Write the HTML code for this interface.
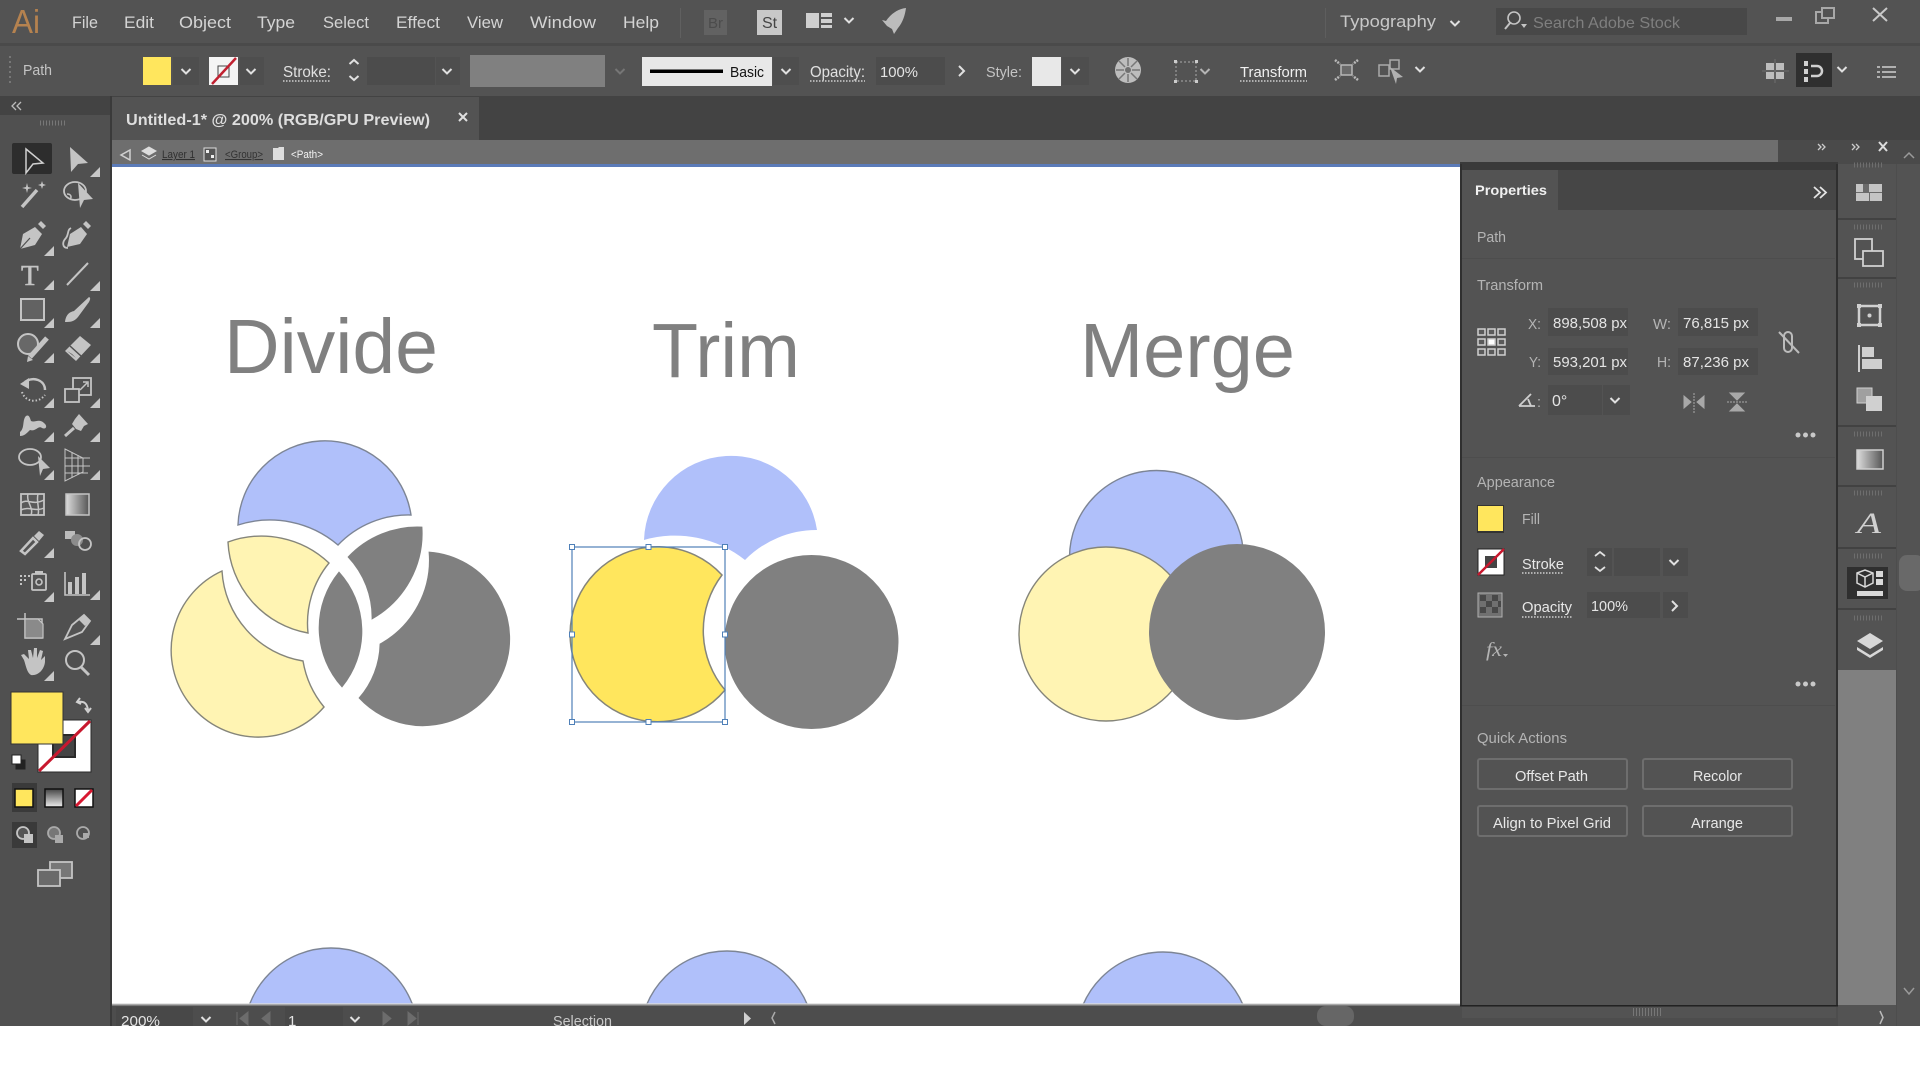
<!DOCTYPE html>
<html><head><meta charset="utf-8"><title>Illustrator</title>
<style>html,body{margin:0;padding:0;background:#fff;overflow:hidden}svg{display:block}text{font-family:"Liberation Sans",sans-serif}</style></head>
<body>
<svg xmlns="http://www.w3.org/2000/svg" width="1920" height="1080" viewBox="0 0 1920 1080">
<defs>
<path id="c" d="M-4.5 -2 L0 2.5 L4.5 -2" fill="none" stroke="#e0e0e0" stroke-width="2"/>
<path id="t" d="M-5 5 L5 5 L5 -5Z" fill="#c8c8c8"/>
<clipPath id="cv"><rect x="112" y="167" width="1348" height="838"/></clipPath>
<linearGradient id="g1" x1="0" x2="1"><stop offset="0" stop-color="#ddd"/><stop offset="1" stop-color="#555"/></linearGradient>
<linearGradient id="g2" x1="0" x2="0" y1="0" y2="1"><stop offset="0" stop-color="#444"/><stop offset="1" stop-color="#eee"/></linearGradient>
</defs>
<rect width="1920" height="1080" fill="#fff"/>
<!-- chrome -->
<rect width="1920" height="1026" fill="#535353"/>
<rect y="43" width="1920" height="3" fill="#4a4a4a"/>
<rect y="96" width="1920" height="44" fill="#434343"/>
<rect x="0" y="115" width="110" height="911" fill="#505050"/>
<rect x="110" y="96" width="2" height="930" fill="#3a3a3a"/>
<rect x="112" y="97" width="367" height="43" fill="#535353"/>
<rect x="112" y="140" width="1666" height="24" fill="#6e6e6e"/>
<rect x="1778" y="140" width="142" height="24" fill="#4a4a4a"/>
<!-- menu -->
<text x="12" y="33" font-size="33" fill="#b5824f" textLength="28" lengthAdjust="spacingAndGlyphs">Ai</text>
<g font-size="17" fill="#d4d4d4">
<text x="72" y="28" textLength="26" lengthAdjust="spacingAndGlyphs">File</text>
<text x="124" y="28" textLength="30" lengthAdjust="spacingAndGlyphs">Edit</text>
<text x="179" y="28" textLength="52" lengthAdjust="spacingAndGlyphs">Object</text>
<text x="257" y="28" textLength="38" lengthAdjust="spacingAndGlyphs">Type</text>
<text x="323" y="28" textLength="46" lengthAdjust="spacingAndGlyphs">Select</text>
<text x="396" y="28" textLength="44" lengthAdjust="spacingAndGlyphs">Effect</text>
<text x="467" y="28" textLength="36" lengthAdjust="spacingAndGlyphs">View</text>
<text x="530" y="28" textLength="66" lengthAdjust="spacingAndGlyphs">Window</text>
<text x="623" y="28" textLength="36" lengthAdjust="spacingAndGlyphs">Help</text>
</g>
<rect x="680" y="8" width="1" height="30" fill="#606060"/>
<rect x="704" y="10" width="23" height="25" fill="#626262"/>
<text x="708" y="28" font-size="15" fill="#4c4c4c">Br</text>
<rect x="757" y="10" width="25" height="25" fill="#c8c8c8"/>
<text x="762" y="28" font-size="16" fill="#444">St</text>
<path d="M806 13h13v15h-13z M821 13h11v4h-11z M821 19h11v4h-11z M821 25h11v3h-11z" fill="#cfcfcf"/>
<use href="#c" x="849" y="20"/>
<path d="M906 8 C897 9 890 15 886 21 L882 20 L887 26 L892 29 L894 34 L898 28 C903 22 905 15 906 8Z" fill="#bcbcbc"/>
<rect x="1325" y="8" width="1" height="30" fill="#5e5e5e"/>
<text x="1340" y="27" font-size="17" fill="#c8c8c8" textLength="96" lengthAdjust="spacingAndGlyphs">Typography</text>
<use href="#c" x="1455" y="23"/>
<rect x="1496" y="8" width="251" height="27" fill="#484848"/>
<circle cx="1514" cy="18" r="6" fill="none" stroke="#c4c4c4" stroke-width="1.6"/><path d="M1510 23 L1505 29" stroke="#c4c4c4" stroke-width="2"/><path d="M1521 24h6l-3 4z" fill="#c4c4c4"/>
<text x="1533" y="28" font-size="16" fill="#7f7f7f" textLength="147" lengthAdjust="spacingAndGlyphs">Search Adobe Stock</text>
<rect x="1776" y="17" width="16" height="4" fill="#a8a8a8"/>
<path d="M1822 8h12v10h-6v5h-12v-11h6z M1822 12h-6 M1822 12v6h6" fill="none" stroke="#a8a8a8" stroke-width="2"/>
<path d="M1873 8L1887 21M1887 8L1873 21" stroke="#c8c8c8" stroke-width="2"/>
<!-- control bar -->
<path d="M10 56v28" stroke="#777" stroke-width="2" stroke-dasharray="2 3"/>
<text x="23" y="75" font-size="15" fill="#c4c4c4" textLength="29" lengthAdjust="spacingAndGlyphs">Path</text>
<rect x="143" y="57" width="28" height="28" fill="#ffe65d"/><rect x="173" y="57" width="26" height="28" fill="#4e4e4e"/><use href="#c" x="186" y="71"/>
<rect x="209" y="57" width="29" height="28" fill="#f4f4f4"/><rect x="218" y="66" width="11" height="11" fill="none" stroke="#444"/><path d="M212 84L236 58" stroke="#c02030" stroke-width="2.5"/>
<rect x="240" y="57" width="24" height="28" fill="#4e4e4e"/><use href="#c" x="251" y="71"/>
<text x="283" y="77" font-size="16" fill="#e0e0e0" textLength="48" lengthAdjust="spacingAndGlyphs">Stroke:</text>
<path d="M283 81h48" stroke="#d0d0d0" stroke-dasharray="1.5 1.5" stroke-width="1.5"/>
<path d="M349.500 64L354 60L358.500 64M349.500 76L354 80L358.500 76" fill="none" stroke="#e0e0e0" stroke-width="2"/>
<rect x="367" y="57" width="68" height="28" fill="#4c4c4c"/><rect x="436" y="57" width="24" height="28" fill="#4e4e4e"/><use href="#c" x="447" y="71"/>
<rect x="470" y="55" width="135" height="32" fill="#808080"/><use href="#c" x="620" y="71" opacity=".25"/>
<rect x="642" y="57" width="130" height="29" fill="#e8e8e8"/><rect x="650" y="69.500" width="73" height="3.500" fill="#000"/>
<text x="730" y="77" font-size="15" fill="#111" textLength="34" lengthAdjust="spacingAndGlyphs">Basic</text>
<rect x="773" y="57" width="26" height="28" fill="#4e4e4e"/><use href="#c" x="786" y="71"/>
<text x="810" y="77" font-size="16" fill="#e0e0e0" textLength="55" lengthAdjust="spacingAndGlyphs">Opacity:</text>
<path d="M810 81h55" stroke="#d0d0d0" stroke-dasharray="1.5 1.5" stroke-width="1.5"/>
<rect x="876" y="57" width="69" height="28" fill="#4c4c4c"/>
<text x="880" y="77" font-size="15" fill="#e4e4e4" textLength="38" lengthAdjust="spacingAndGlyphs">100%</text>
<path d="M959 66l5 5l-5 5" fill="none" stroke="#e0e0e0" stroke-width="2"/>
<text x="986" y="77" font-size="15" fill="#c4c4c4" textLength="36" lengthAdjust="spacingAndGlyphs">Style:</text>
<rect x="1032" y="57" width="29" height="29" fill="#e8e8e8"/><rect x="1062" y="57" width="27" height="28" fill="#4e4e4e"/><use href="#c" x="1075" y="71"/>
<circle cx="1128" cy="70" r="13" fill="#bdbdbd"/><circle cx="1128" cy="70" r="3" fill="#707070"/><path d="M1128 58v8M1128 74v8M1116 70h8M1132 70h8M1119 61l6 6M1131 73l6 6M1137 61l-6 6M1125 73l-6 6" stroke="#777" stroke-width="1.5"/>
<rect x="1176" y="62" width="20" height="19" fill="none" stroke="#aaa" stroke-dasharray="2 2"/><path d="M1174 60h3v3h-3zM1195 60h3v3h-3zM1174 80h3v3h-3zM1195 80h3v3h-3z" fill="#ccc"/>
<use href="#c" x="1205" y="71" opacity=".7"/>
<text x="1240" y="77" font-size="15" fill="#f0f0f0" textLength="67" lengthAdjust="spacingAndGlyphs">Transform</text>
<path d="M1240 81h67" stroke="#d0d0d0" stroke-dasharray="1.5 1.5" stroke-width="1.5"/>
<rect x="1341" y="65" width="11" height="10" fill="#6a6a6a" stroke="#b8b8b8" stroke-width="1.500"/>
<path d="M1335 60l5 4M1358 60l-5 4M1335 80l5 -4M1358 80l-5 -4" stroke="#b8b8b8" stroke-width="2.500" stroke-dasharray="2 1"/>
<rect x="1379" y="65" width="10" height="11" fill="none" stroke="#aaa" stroke-width="1.500"/><rect x="1390" y="60" width="9" height="9" fill="none" stroke="#aaa" stroke-width="1.500"/>
<path d="M1390 67L1403 77L1397 78L1396 84Z" fill="#b0b0b0"/><use href="#c" x="1420" y="69"/>
<path d="M1766 63h8v7h-8zM1776 63h8v7h-8zM1766 72h8v7h-8zM1776 72h8v7h-8z" fill="#bdbdbd"/><path d="M1762 71h27M1775 59v24" stroke="#777" stroke-width=".8"/>
<rect x="1796" y="53" width="36" height="34" fill="#2f2f2f"/>
<path d="M1804 61h4v5h-4zM1804 69h4v5h-4zM1804 77h4v5h-4z" fill="#d0d0d0"/><path d="M1811 66h6a5 5 0 0 1 0 10h-6" fill="none" stroke="#d0d0d0" stroke-width="2.500"/>
<use href="#c" x="1842" y="69"/>
<path d="M1877 66h3v2h-3zM1882 66h14v2h-14zM1877 71h3v2h-3zM1882 71h14v2h-14zM1877 76h3v2h-3zM1882 76h14v2h-14z" fill="#b0b0b0"/>
<!-- tab -->
<text x="126" y="125" font-size="16" font-weight="bold" fill="#dedede" textLength="304" lengthAdjust="spacingAndGlyphs">Untitled-1* @ 200% (RGB/GPU Preview)</text>
<path d="M459 113l8 8M467 113l-8 8" stroke="#e0e0e0" stroke-width="2"/>
<path d="M16 102l-4 4l4 4M21 102l-4 4l4 4" fill="none" stroke="#bbb" stroke-width="1.300"/>
<path d="M40 123h27" stroke="#777" stroke-width="5" stroke-dasharray="1 2"/>
<!-- breadcrumb -->
<path d="M130 150l-9 5l9 5z" fill="none" stroke="#d0d0d0" stroke-width="1.500"/>
<path d="M149 147l7 4l-7 4l-7 -4zM142 155l7 4l7 -4l-7 4z" fill="#ddd" stroke="#ddd"/>
<text x="162" y="158" font-size="11" fill="#303030" textLength="33" lengthAdjust="spacingAndGlyphs" text-decoration="underline">Layer 1</text>
<rect x="204" y="148" width="12" height="13" fill="#555" stroke="#ddd"/><path d="M206 150h3v3h-3zM211 155h3v3h-3z" fill="#eee"/>
<text x="225" y="158" font-size="11" fill="#333" textLength="38" lengthAdjust="spacingAndGlyphs" text-decoration="underline">&lt;Group&gt;</text>
<path d="M273 148h5l1 -1h5v13h-11z" fill="#ddd"/>
<text x="291" y="158" font-size="11" fill="#f4f4f4" textLength="32" lengthAdjust="spacingAndGlyphs">&lt;Path&gt;</text>
<path d="M1818 144l3 3l-3 3M1822 144l3 3l-3 3M1852 144l3 3l-3 3M1856 144l3 3l-3 3" fill="none" stroke="#ccc" stroke-width="1.300"/>
<path d="M1879 142l8 9M1887 142l-8 9" stroke="#ddd" stroke-width="2"/>
<path d="M1904 158l5 -5l5 5" fill="none" stroke="#9a9a9a" stroke-width="1.500"/>
<!-- canvas -->
<rect x="112" y="164" width="1348" height="3" fill="#5b7bb8"/>
<rect x="112" y="167" width="1348" height="838" fill="#fff"/>
<g clip-path="url(#cv)">
<g fill="#808080" text-anchor="start">
<text x="224" y="373" font-size="77" textLength="214" lengthAdjust="spacingAndGlyphs">Divide</text>
<text x="652" y="377" font-size="77" textLength="148" lengthAdjust="spacingAndGlyphs">Trim</text>
<text x="1080" y="377" font-size="77" textLength="215" lengthAdjust="spacingAndGlyphs">Merge</text>
</g>
<g stroke="#85857a" stroke-width="1.400">
<path d="M238 525A87 87 0 0 1 411 515A97 97 0 0 0 338 545A105 105 0 0 0 238 525Z" fill="#b0c0fa" stroke="#7d8595"/>
<path d="M228 542A98 98 0 0 1 329 563A95 95 0 0 0 308 633A97 97 0 0 1 228 542Z" fill="#fff4b3"/>
<path d="M222 571A87 87 0 1 0 324 707A98 98 0 0 1 303 661A97 97 0 0 1 222 571Z" fill="#fff4b3"/>
</g>
<g fill="#808080" stroke="#808080" stroke-width=".8">
<path d="M348 557A95 95 0 0 1 422 527A98 98 0 0 1 372 619A88 88 0 0 0 348 557Z"/>
<path d="M339 572A88 88 0 0 1 342 687A88 88 0 0 1 339 572Z"/>
<path d="M429 552A87 87 0 1 1 359 698A85 85 0 0 0 380 644A96 96 0 0 0 429 552Z"/>
</g>
<path d="M644 540A87 87 0 0 1 817 530A100 100 0 0 0 745 560A112 112 0 0 0 644 540Z" fill="#b0c0fa"/>
<circle cx="811.500" cy="642" r="87" fill="#808080"/>
<path d="M722 575A87.500 87.500 0 1 0 725 690A92 92 0 0 1 722 575Z" fill="#ffe65d" stroke="#85857a" stroke-width="1.500"/>
<rect x="572" y="547" width="153" height="175" fill="none" stroke="#4f80b8" stroke-width="1.200"/>
<g fill="#fff" stroke="#4f80b8" stroke-width="1">
<rect x="569.500" y="544.500" width="5" height="5"/><rect x="646" y="544.500" width="5" height="5"/><rect x="722.500" y="544.500" width="5" height="5"/>
<rect x="569.500" y="632" width="5" height="5"/><rect x="722.500" y="632" width="5" height="5"/>
<rect x="569.500" y="719.500" width="5" height="5"/><rect x="646" y="719.500" width="5" height="5"/><rect x="722.500" y="719.500" width="5" height="5"/>
</g>
<circle cx="1156.500" cy="557.500" r="87" fill="#b0c0fa" stroke="#7d8595" stroke-width="1.400"/>
<circle cx="1106" cy="634" r="87" fill="#fff4b3" stroke="#85857a" stroke-width="1.400"/>
<circle cx="1237" cy="632" r="88" fill="#808080"/>
<g fill="#b0c0fa" stroke="#7d8595" stroke-width="1.400">
<circle cx="331" cy="1035" r="87"/><circle cx="727" cy="1038" r="87"/><circle cx="1163" cy="1039" r="87"/>
</g>
<rect x="112" y="1003" width="1348" height="2" fill="#dcdcdc" opacity=".7"/>
</g>
<!-- tools -->
<rect x="12" y="143" width="40" height="31" rx="2" fill="#2d2d2d"/>
<g fill="#c4c4c4" stroke="#c4c4c4" stroke-width="0">
<path d="M26 149L43 163L33 164L26 173Z" fill="#2d2d2d" stroke="#d0d0d0" stroke-width="1.500"/>
<path d="M70 147L88 163L78 164L71 172Z"/>
<!-- wand -->
<path d="M22 207L37 190" stroke-width="3.500" stroke="#c4c4c4"/><path d="M27 183l1 4l4 1l-4 1l-1 4l-1 -4l-4 -1l4 -1zM42 181l1 3l3 1l-3 1l-1 3l-1 -3l-3 -1l3 -1z"/>
<ellipse cx="75" cy="191" rx="11" ry="9" fill="none" stroke="#c4c4c4" stroke-width="1.800"/><path d="M78 183L93 199L84 200L80 208Z"/><path d="M67 194c4 0 5 3 3 5" fill="none" stroke="#c4c4c4" stroke-width="1.500"/>
<!-- pen -->
<path d="M20 249L23 234L35 227L42 234L35 245Z"/><path d="M38 224L41 221L46 226L43 229Z"/><path d="M20 249L30 238" stroke="#505050" stroke-width="1.200"/>
<path d="M67 247L70 234L81 227L87 234L80 244Z"/><path d="M83 224L86 221L91 226L88 229Z"/><path d="M68 248C62 248 62 242 66 238C69 234 67 230 71 228" fill="none" stroke="#c4c4c4" stroke-width="1.800"/>
<!-- type, line -->
<text x="21" y="285" font-size="29" style='font-family:"Liberation Serif",serif' fill="#c4c4c4" stroke="#c4c4c4" stroke-width=".5">T</text>
<path d="M67 285L88 263" stroke="#c4c4c4" stroke-width="2"/>
<!-- rect, brush -->
<rect x="21" y="299" width="23" height="21" fill="#626262" stroke="#c4c4c4" stroke-width="2"/>
<path d="M65 322C66 314 70 312 74 311L89 297C91 298 90 300 89 302L78 317C74 322 70 322 65 322Z"/>
<!-- shaper, eraser -->
<circle cx="28" cy="344" r="10" fill="#686868" stroke="#c4c4c4" stroke-width="2"/><path d="M30 357L47 338" stroke="#c4c4c4" stroke-width="5"/><path d="M27 362L28 356L33 360Z"/>
<path d="M65 351L80 336L91 345L76 361Z"/><path d="M70 346L81 356" stroke="#505050" stroke-width="1.500"/><path d="M67 351L76 358L72 354Z" fill="#535353"/>
<!-- rotate, scale -->
<path d="M25 382C33 376 45 380 45 390" fill="none" stroke="#c4c4c4" stroke-width="2.500"/><path d="M20 384L29 378L29 389Z"/><path d="M22 392C25 402 38 404 45 395" fill="none" stroke="#c4c4c4" stroke-width="2" stroke-dasharray="1.500 2"/>
<rect x="73" y="378" width="18" height="17" fill="none" stroke="#c4c4c4" stroke-width="1.800"/><rect x="65" y="389" width="14" height="13" fill="#535353" stroke="#c4c4c4" stroke-width="1.800"/><path d="M80 390L87 383M83 382h5v5" fill="none" stroke="#c4c4c4" stroke-width="1.500"/>
<!-- width, pin -->
<path d="M20 432C25 428 22 420 26 416C29 414 30 418 31 421C35 423 39 418 44 423C48 426 46 430 42 428C38 425 36 432 30 430C26 434 24 436 20 436Z"/>
<path d="M79 414L88 424L84 426L81 431L76 429L72 424L75 419Z"/><path d="M74 428L65 436" stroke="#c4c4c4" stroke-width="3"/>
<!-- free transform, mesh persp -->
<ellipse cx="30" cy="457" rx="11" ry="8" fill="none" stroke="#c4c4c4" stroke-width="1.800"/><path d="M38 456L50 468L43 469L40 476Z"/><path d="M24 453v8M28 453v8" stroke="#c4c4c4" stroke-dasharray="1 2"/>
<path d="M65 449L83 458V472L65 481ZM65 458H90M65 466H90M65 473H88M72 452V478M78 455V475" fill="none" stroke="#c4c4c4" stroke-width="1"/>
<!-- mesh, gradient -->
<rect x="21" y="494" width="23" height="21" fill="#5a5a5a" stroke="#c4c4c4" stroke-width="1.800"/><path d="M21 503C28 498 32 506 44 500M28 494C26 502 34 508 31 515M21 510C28 506 36 512 44 508M38 494C36 502 40 508 38 515" fill="none" stroke="#c4c4c4" stroke-width="1.500"/>
<rect x="66" y="494" width="23" height="21" fill="url(#g1)" stroke="#c4c4c4" stroke-width="1.500"/>
<!-- eyedropper, blend -->
<path d="M21 551L33 538L37 542L25 554Z" fill="#535353" stroke="#c4c4c4" stroke-width="2.500"/><path d="M34 536L39 531L44 535L39 541Z"/>
<rect x="65" y="531" width="10" height="8" fill="#bcbcbc"/><circle cx="77" cy="540" r="6" fill="#8c8c8c" stroke="#c4c4c4"/><circle cx="85" cy="544" r="6" fill="none" stroke="#c4c4c4" stroke-width="1.800"/>
<!-- symbol, graph -->
<rect x="32" y="574" width="14" height="16" rx="1" fill="#535353" stroke="#c4c4c4" stroke-width="1.800"/><circle cx="39" cy="582" r="3" fill="none" stroke="#c4c4c4" stroke-width="1.600"/><rect x="35" y="571" width="8" height="3"/><path d="M20 575h2v2h-2zM24 575h2v2h-2zM28 575h2v2h-2zM20 579h2v2h-2zM24 579h2v2h-2zM20 583h2v2h-2z"/>
<path d="M65 572V595H90" fill="none" stroke="#c4c4c4" stroke-width="1.600"/><path d="M68 582h4v12h-4zM75 577h4v17h-4zM82 573h4v21h-4z"/>
<!-- artboard, knife -->
<path d="M17 619H42V638H25V613" fill="none" stroke="#c4c4c4" stroke-width="1.500"/><path d="M25 619H38L43 624V638H25Z" fill="#8a8a8a" stroke="#c4c4c4" stroke-width="1.200"/>
<path d="M65 639L72 625L84 615L90 621L82 632Z" fill="#535353" stroke="#c4c4c4" stroke-width="1.800"/><path d="M79 620L85 626L90 621L84 615Z"/>
<!-- hand, zoom -->
<path d="M24 660L21 655L24 654L29 659L28 650L31 650L33 658L34 648L37 648L37 658L40 650L43 651L41 660L45 656L45 662C44 670 38 676 31 675C27 673 26 666 24 660Z"/>
<circle cx="75" cy="660" r="9" fill="none" stroke="#c4c4c4" stroke-width="2"/><path d="M81 667L89 675" stroke="#c4c4c4" stroke-width="3"/>
</g>
<use href="#t" x="95" y="172"/><use href="#t" x="49" y="251"/><use href="#t" x="49" y="285"/><use href="#t" x="95" y="286"/><use href="#t" x="49" y="323"/><use href="#t" x="95" y="323"/><use href="#t" x="49" y="358"/><use href="#t" x="95" y="358"/><use href="#t" x="49" y="403"/><use href="#t" x="95" y="403"/><use href="#t" x="49" y="437"/><use href="#t" x="95" y="437"/><use href="#t" x="49" y="475"/><use href="#t" x="95" y="475"/><use href="#t" x="49" y="553"/><use href="#t" x="49" y="597"/><use href="#t" x="95" y="595"/><use href="#t" x="95" y="640"/><use href="#t" x="49" y="676"/>
<path d="M38 720H91V772H38Z" fill="#fff" stroke="#2a2a2a"/><rect x="53" y="735" width="22" height="22" fill="#444" stroke="#2a2a2a" stroke-width="2"/>
<path d="M39 771L90 721" stroke="#c8182e" stroke-width="3"/>
<rect x="11" y="692" width="52" height="52" fill="#ffe65d" stroke="#333"/>
<path d="M80 698l-3 4l4 2M78 702C84 701 87 703 88 710M85 708l3 4l3 -4" fill="none" stroke="#d0d0d0" stroke-width="2"/>
<rect x="16" y="760" width="9" height="9" fill="#222" stroke="#222"/><rect x="12" y="755" width="9" height="9" fill="#fff" stroke="#222"/>
<rect x="12" y="783" width="25" height="29" fill="#3a3a3a"/><rect x="15" y="789" width="18" height="18" fill="#ffe65d" stroke="#111" stroke-width="1.500"/>
<rect x="45" y="789" width="18" height="18" fill="url(#g2)" stroke="#111" stroke-width="1.500"/>
<rect x="75" y="789" width="18" height="18" fill="#fff" stroke="#111" stroke-width="1.500"/><path d="M76 806L92 790" stroke="#d81830" stroke-width="3"/>
<rect x="12" y="822" width="25" height="26" fill="#3a3a3a"/>
<circle cx="23" cy="833" r="6" fill="#555" stroke="#c4c4c4" stroke-width="1.800"/><rect x="24" y="834" width="9" height="9" fill="#c4c4c4"/>
<circle cx="54" cy="833" r="6" fill="#777" stroke="#aaa" stroke-width="1.800"/><rect x="55" y="835" width="8" height="8" fill="#aaa"/>
<circle cx="83" cy="833" r="6" fill="none" stroke="#aaa" stroke-width="1.800"/><path d="M83 833h6v5h-6z" fill="#aaa"/>
<rect x="50" y="862" width="22" height="16" fill="#777" stroke="#c4c4c4" stroke-width="1.800"/><rect x="38" y="870" width="22" height="16" fill="#6a6a6a" stroke="#c4c4c4" stroke-width="1.800"/>
<!-- panel -->
<rect x="1460" y="162" width="378" height="8" fill="#3a3a3a"/>
<rect x="1460" y="164" width="2" height="842" fill="#2f2f2f"/>
<rect x="1558" y="170" width="278" height="40" fill="#464646"/>
<rect x="1836" y="164" width="2" height="842" fill="#2f2f2f"/>
<text x="1475" y="195" font-size="14" font-weight="bold" fill="#f0f0f0" textLength="72" lengthAdjust="spacingAndGlyphs">Properties</text>
<path d="M1814 187l6 5.500l-6 5.500M1820 187l6 5.500l-6 5.500" fill="none" stroke="#e4e4e4" stroke-width="1.800"/>
<g font-size="14.500" fill="#b4b4b4">
<text x="1477" y="242" textLength="29" lengthAdjust="spacingAndGlyphs">Path</text>
<text x="1477" y="290" textLength="66" lengthAdjust="spacingAndGlyphs">Transform</text>
<text x="1477" y="487" textLength="78" lengthAdjust="spacingAndGlyphs">Appearance</text>
<text x="1477" y="743" textLength="90" lengthAdjust="spacingAndGlyphs">Quick Actions</text>
<text x="1528" y="329" textLength="13" lengthAdjust="spacingAndGlyphs">X:</text>
<text x="1529" y="367" textLength="12" lengthAdjust="spacingAndGlyphs">Y:</text>
<text x="1653" y="329" textLength="18" lengthAdjust="spacingAndGlyphs">W:</text>
<text x="1657" y="367" textLength="14" lengthAdjust="spacingAndGlyphs">H:</text>
<text x="1537" y="407">:</text>
<text x="1522" y="524" textLength="18" lengthAdjust="spacingAndGlyphs">Fill</text>
</g>
<g fill="#4c4c4c"><rect x="1462" y="258" width="373" height="1" fill="#4d4d4d"/><rect x="1462" y="457" width="373" height="1" fill="#4d4d4d"/><rect x="1462" y="705" width="373" height="1" fill="#4d4d4d"/>
<rect x="1548" y="308" width="80" height="28"/><rect x="1548" y="348" width="80" height="27"/><rect x="1678" y="308" width="80" height="28"/><rect x="1678" y="348" width="80" height="27"/><rect x="1548" y="385" width="54" height="30"/><rect x="1603" y="385" width="27" height="30"/>
<rect x="1587" y="548" width="25" height="28"/><rect x="1614" y="548" width="46" height="28"/><rect x="1663" y="548" width="25" height="28"/><rect x="1587" y="592" width="73" height="26"/><rect x="1663" y="592" width="25" height="26"/></g>
<g font-size="15" fill="#e4e4e4">
<text x="1553" y="328" textLength="74" lengthAdjust="spacingAndGlyphs">898,508 px</text>
<text x="1553" y="367" textLength="74" lengthAdjust="spacingAndGlyphs">593,201 px</text>
<text x="1683" y="328" textLength="66" lengthAdjust="spacingAndGlyphs">76,815 px</text>
<text x="1683" y="367" textLength="66" lengthAdjust="spacingAndGlyphs">87,236 px</text>
<text x="1552" y="406" font-size="16">0°</text>
<text x="1591" y="611" textLength="37" lengthAdjust="spacingAndGlyphs">100%</text>
</g>
<g fill="#5a5a5a" stroke="#d0d0d0" stroke-width="1.500">
<rect x="1478" y="329" width="7" height="6"/><rect x="1488" y="329" width="7" height="6"/><rect x="1498" y="329" width="7" height="6"/>
<rect x="1478" y="339" width="7" height="6"/><rect x="1488" y="339" width="7" height="6" fill="#fff"/><rect x="1498" y="339" width="7" height="6"/>
<rect x="1478" y="349" width="7" height="6"/><rect x="1488" y="349" width="7" height="6"/><rect x="1498" y="349" width="7" height="6"/>
</g>
<rect x="1784" y="332" width="8" height="20" rx="4" fill="none" stroke="#bcbcbc" stroke-width="2"/><path d="M1779 332L1799 353" stroke="#bcbcbc" stroke-width="2"/>
<path d="M1519 406L1531 394M1519 406H1535M1528 399L1531 406" fill="none" stroke="#cfcfcf" stroke-width="1.800"/>
<use href="#c" x="1615" y="400"/>
<path d="M1684 396L1691 402L1684 408ZM1704 396L1697 402L1704 408Z" fill="#a8a8a8" stroke="#a8a8a8"/><path d="M1694 393v20" stroke="#a8a8a8" stroke-dasharray="2 1"/>
<path d="M1730 393H1744L1737 400ZM1730 411H1744L1737 404Z" fill="#a8a8a8" stroke="#a8a8a8"/><path d="M1727 402h20" stroke="#a8a8a8" stroke-dasharray="2 1"/>
<g fill="#c8c8c8"><circle cx="1798" cy="435" r="2.500"/><circle cx="1805.500" cy="435" r="2.500"/><circle cx="1813" cy="435" r="2.500"/><circle cx="1798" cy="684" r="2.500"/><circle cx="1805.500" cy="684" r="2.500"/><circle cx="1813" cy="684" r="2.500"/></g>
<rect x="1477" y="505" width="27" height="28" fill="#333"/><rect x="1478" y="506" width="25" height="25" fill="#ffe65d"/>
<rect x="1478" y="549" width="26" height="26" fill="#fff" stroke="#222"/><rect x="1485" y="556" width="12" height="12" fill="#444"/><path d="M1478 575L1504 549" stroke="#c8182e" stroke-width="2.500"/>
<text x="1522" y="569" font-size="15" fill="#e8e8e8" textLength="42" lengthAdjust="spacingAndGlyphs">Stroke</text><path d="M1522 573h42" stroke="#d0d0d0" stroke-width="1.500" stroke-dasharray="1.500 1.500"/>
<path d="M1595 556l5 -4l5 4M1595 567l5 4l5 -4" fill="none" stroke="#e0e0e0" stroke-width="1.800"/><use href="#c" x="1674" y="562"/>
<rect x="1478" y="593" width="24" height="24" fill="#707070" stroke="#b0b0b0"/><path d="M1480 595h6v6h-6zM1492 595h6v6h-6zM1486 601h6v6h-6zM1498 601h3v6h-3zM1480 607h6v6h-6zM1492 607h6v6h-6z" fill="#484848"/>
<text x="1522" y="612" font-size="15" fill="#e8e8e8" textLength="50" lengthAdjust="spacingAndGlyphs">Opacity</text><path d="M1522 617h50" stroke="#d0d0d0" stroke-width="1.500" stroke-dasharray="1.500 1.500"/>
<path d="M1672 601l5 5l-5 5" fill="none" stroke="#e0e0e0" stroke-width="2"/>
<text x="1486" y="656" font-size="20" font-style="italic" fill="#b4b4b4" style='font-family:"Liberation Serif",serif' textLength="16" lengthAdjust="spacingAndGlyphs">fx</text><path d="M1503 654h5l-2.500 3z" fill="#b4b4b4"/>
<g fill="none" stroke="#6e6e6e" stroke-width="2"><rect x="1478" y="759" width="149" height="30" rx="2"/><rect x="1643" y="759" width="149" height="30" rx="2"/><rect x="1478" y="806" width="149" height="30" rx="2"/><rect x="1643" y="806" width="149" height="30" rx="2"/></g>
<g font-size="15" fill="#e8e8e8">
<text x="1515" y="781" textLength="73" lengthAdjust="spacingAndGlyphs">Offset Path</text>
<text x="1693" y="781" textLength="49" lengthAdjust="spacingAndGlyphs">Recolor</text>
<text x="1493" y="828" textLength="118" lengthAdjust="spacingAndGlyphs">Align to Pixel Grid</text>
<text x="1691" y="828" textLength="52" lengthAdjust="spacingAndGlyphs">Arrange</text>
</g>
<!-- dock -->
<rect x="1838" y="670" width="58" height="335" fill="#808080"/>
<g fill="#424242"><rect x="1838" y="218" width="58" height="2"/><rect x="1838" y="277" width="58" height="2"/><rect x="1838" y="425" width="58" height="2"/><rect x="1838" y="485" width="58" height="2"/><rect x="1838" y="547" width="58" height="2"/><rect x="1838" y="608" width="58" height="2"/></g>
<g stroke="#6e6e6e" stroke-width="5" stroke-dasharray="1 2"><path d="M1854 165h30M1854 227h30M1854 285h30M1854 434h30M1854 493h30M1854 556h30M1854 618h30"/></g>
<rect x="1856" y="184" width="26" height="17" fill="#c4c4c4"/><path d="M1863 184h6v8h-6zM1875 192h7v1h-7zM1856 192h26v1h-26zM1869 193h1v8h-1z" fill="#6a6a6a"/>
<rect x="1855" y="239" width="17" height="20" fill="none" stroke="#d0d0d0" stroke-width="1.800"/><rect x="1863" y="251" width="20" height="15" fill="#535353" stroke="#d0d0d0" stroke-width="1.800"/>
<rect x="1859" y="306" width="21" height="19" fill="none" stroke="#d0d0d0" stroke-width="2.500"/><circle cx="1869.500" cy="315.500" r="2" fill="#d0d0d0"/><path d="M1857 304h4v4h-4zM1878 304h4v4h-4zM1857 323h4v4h-4zM1878 323h4v4h-4z" fill="#d0d0d0"/>
<path d="M1858 345h2v27h-2zM1862 347h12v10h-12zM1862 359h20v10h-20z" fill="#cfcfcf"/>
<rect x="1857" y="388" width="15" height="15" fill="#a0a0a0" stroke="#d0d0d0"/><rect x="1866" y="396" width="16" height="15" fill="#d0d0d0"/>
<rect x="1857" y="450" width="26" height="19" fill="url(#g1)" stroke="#d0d0d0" stroke-width="1.500"/>
<text x="1857" y="533" font-size="30" font-style="italic" fill="#d0d0d0" style='font-family:"Liberation Serif",serif' textLength="24" lengthAdjust="spacingAndGlyphs">A</text>
<rect x="1847" y="567" width="41" height="32" fill="#2f2f2f"/>
<path d="M1857 573l8 -3l8 3v10l-8 4l-8 -4zM1857 573l8 4l8 -4M1865 577v10" fill="none" stroke="#d8d8d8" stroke-width="1.500"/><path d="M1876 571h7v6h-7zM1876 579h7v6h-7zM1857 591h26v5h-26z" fill="#d8d8d8"/>
<path d="M1870 633L1883 641L1870 649L1857 641Z" fill="#d8d8d8"/><path d="M1857 647L1870 655L1883 647V650L1870 658L1857 650Z" fill="#d8d8d8"/>
<rect x="1899" y="555" width="25" height="36" rx="8" fill="#696969"/>
<path d="M1904 988l5 6l5 -6" fill="none" stroke="#9a9a9a" stroke-width="1.500"/>
<!-- status -->
<rect x="112" y="1005" width="1726" height="21" fill="#4d4d4d"/>
<rect x="112" y="1004" width="1348" height="1.500" fill="#aaa"/>
<rect x="1460" y="1005" width="378" height="1.500" fill="#222"/>
<rect x="1462" y="1007" width="374" height="11" fill="#535353"/>
<path d="M1633 1012h30" stroke="#777" stroke-width="8" stroke-dasharray="1 2"/>
<rect x="1896" y="164" width="1" height="862" fill="#4d4d4d"/>
<rect x="116" y="1007" width="77" height="19" fill="#484848"/><rect x="285" y="1007" width="58" height="19" fill="#484848"/>
<text x="121" y="1026" font-size="15" fill="#e4e4e4" textLength="39" lengthAdjust="spacingAndGlyphs">200%</text>
<use href="#c" x="206" y="1019"/>
<path d="M237 1012v13M248 1012l-8 6.500l8 6.500zM270 1012l-8 6.500l8 6.500zM383 1012l8 6.500l-8 6.500zM408 1012l8 6.500l-8 6.500zM418 1012v13" fill="#6c6c6c" stroke="#6c6c6c"/>
<text x="288" y="1026" font-size="15" fill="#e4e4e4">1</text>
<use href="#c" x="355" y="1019"/>
<text x="553" y="1026" font-size="15" fill="#c8c8c8" textLength="59" lengthAdjust="spacingAndGlyphs">Selection</text>
<path d="M744 1012l7 6.500l-7 6.500z" fill="#d0d0d0"/>
<path d="M775 1012l-3 6l3 6" fill="none" stroke="#aaa" stroke-width="1.500"/>
<path d="M1880 1011l3 6.500l-3 6.500" fill="none" stroke="#bbb" stroke-width="1.500"/>
<rect x="1317" y="1006" width="37" height="20" rx="9" fill="#666"/>
<rect x="0" y="1026" width="1920" height="54" fill="#fff"/>
</svg>
</body></html>
